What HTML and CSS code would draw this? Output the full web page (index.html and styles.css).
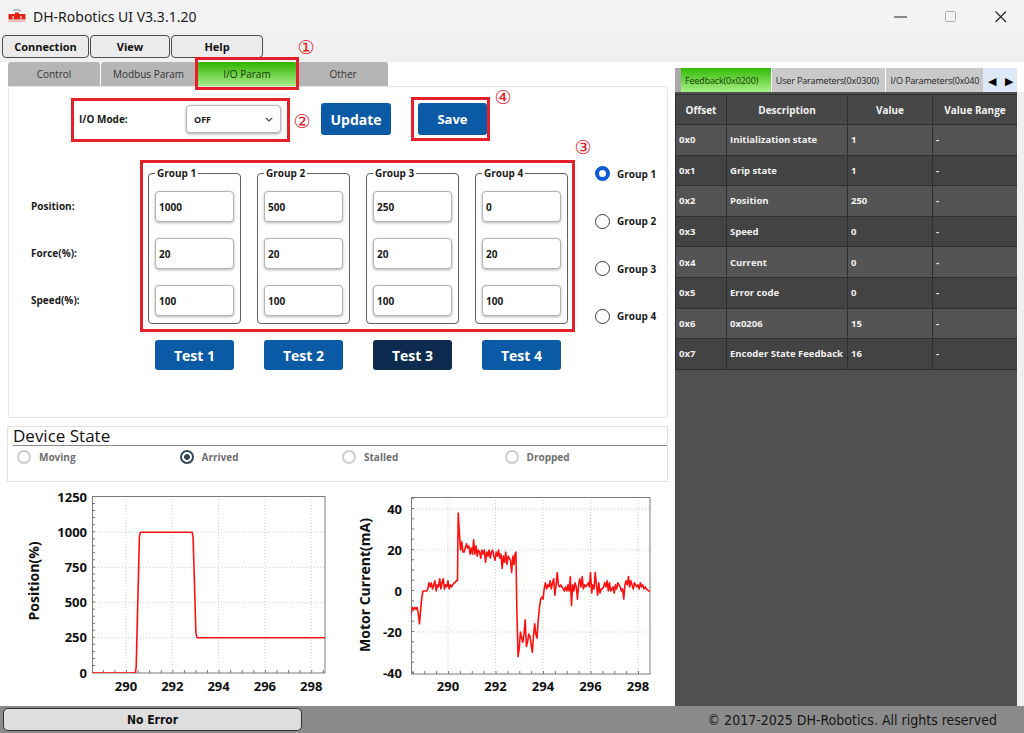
FILE: index.html
```html
<!DOCTYPE html>
<html>
<head>
<meta charset="utf-8">
<title>DH-Robotics UI V3.3.1.20</title>
<link rel="stylesheet" href="styles.css">
</head>
<body>
<div class="window">
  <header class="titlebar">
    <svg class="logo" viewBox="0 0 18 14" width="18" height="14">
      <path d="M5 3.2 Q9 -0.4 13 3.2" fill="none" stroke="#9fb4c8" stroke-width="1.4"/>
      <rect x="0.5" y="6" width="17" height="5.5" fill="#e2231a"/>
      <rect x="7" y="4.5" width="4" height="2" fill="#e2231a"/>
      <rect x="4.5" y="8" width="1" height="3.5" fill="#fff"/>
      <rect x="12.5" y="8" width="1" height="3.5" fill="#fff"/>
      <rect x="0.5" y="12.6" width="17" height="1" fill="#f08a86"/>
    </svg>
    <span class="title">DH-Robotics UI V3.3.1.20</span>
    <div class="winctrl">
      <div class="wc"><svg width="14" height="2" viewBox="0 0 14 2"><rect x="0" y="0.5" width="13" height="1" fill="#222"/></svg></div>
      <div class="wc"><svg width="12" height="12" viewBox="0 0 12 12"><rect x="0.5" y="0.5" width="10" height="10" rx="1.5" fill="none" stroke="#b0b0b0"/></svg></div>
      <div class="wc"><svg width="12" height="12" viewBox="0 0 12 12"><path d="M0.5 0.5 L11 11 M11 0.5 L0.5 11" stroke="#222" stroke-width="1.1"/></svg></div>
    </div>
  </header>

  <nav class="menubar">
    <div class="mbtn m-conn">Connection</div>
    <div class="mbtn m-view">View</div>
    <div class="mbtn m-help">Help</div>
  </nav>

  <div class="main">
    <section class="left">
      <div class="tabs">
        <div class="tab t1">Control</div>
        <div class="tab t2">Modbus Param</div>
        <div class="tab t3 active">I/O Param</div>
        <div class="tab t4">Other</div>
      </div>

      <div class="panel">
        <div class="iorow">
          <span class="iolabel">I/O Mode:</span>
          <div class="sel"><span>OFF</span>
            <svg width="8" height="5" viewBox="0 0 8 5"><path d="M0.8 0.8 L4 4 L7.2 0.8" fill="none" stroke="#444" stroke-width="1.2"/></svg>
          </div>
          <div class="btn b-update">Update</div>
          <div class="btn b-save">Save</div>
        </div>

        <div class="grouprow">
          <div class="labels">
            <div class="lab">Position:</div>
            <div class="lab">Force(%):</div>
            <div class="lab">Speed(%):</div>
          </div>
          <div class="groups">
            <div class="gbox"><div class="gtitle">Group 1</div>
              <div class="inp">1000</div><div class="inp">20</div><div class="inp">100</div></div>
            <div class="gbox"><div class="gtitle">Group 2</div>
              <div class="inp">500</div><div class="inp">20</div><div class="inp">100</div></div>
            <div class="gbox"><div class="gtitle">Group 3</div>
              <div class="inp">250</div><div class="inp">20</div><div class="inp">100</div></div>
            <div class="gbox"><div class="gtitle">Group 4</div>
              <div class="inp">0</div><div class="inp">20</div><div class="inp">100</div></div>
          </div>
          <div class="radios">
            <div class="gr"><span class="rc on"></span>Group 1</div>
            <div class="gr"><span class="rc"></span>Group 2</div>
            <div class="gr"><span class="rc"></span>Group 3</div>
            <div class="gr"><span class="rc"></span>Group 4</div>
          </div>
        </div>

        <div class="tests">
          <div class="btn tbtn">Test 1</div>
          <div class="btn tbtn">Test 2</div>
          <div class="btn tbtn dark">Test 3</div>
          <div class="btn tbtn">Test 4</div>
        </div>
      </div>

      <div class="device">
        <div class="dtitle">Device State</div>
        <div class="states">
          <div class="st"><span class="rd"></span>Moving</div>
          <div class="st"><span class="rd on"></span>Arrived</div>
          <div class="st"><span class="rd"></span>Stalled</div>
          <div class="st"><span class="rd"></span>Dropped</div>
        </div>
      </div>

      <div class="charts">
        <svg width="668" height="224" viewBox="0 0 668 224">
          <defs>
            <clipPath id="cl"><rect x="92" y="14" width="233" height="177"/></clipPath>
            <clipPath id="cr"><rect x="411" y="15" width="239" height="177"/></clipPath>
          </defs>
          <!-- left chart -->
          <g class="grid">
            <path d="M126 14V191M172.3 14V191M218.6 14V191M264.9 14V191M311.2 14V191M92 155.8H325M92 120.6H325M92 85.4H325M92 50.2H325"/>
          </g>
          <path class="minor" d="M93.5 191V14" stroke-dasharray="1 6.04"/>
          <path class="minor" d="M102.85 189.5H325" stroke-dasharray="1 10.575"/>
          <rect class="frame" x="92.5" y="14.5" width="232.5" height="176.5"/>
          <g clip-path="url(#cl)">
            <g transform="translate(126 191) scale(23.15 -0.1408)">
              <polyline class="line" points="-1.7,0 0.40,0 0.44,40 0.58,970 0.62,1000 2.86,1000 2.9,960 3.02,280 3.07,250 8.8,250"/>
            </g>
          </g>
          <g class="tl">
            <text x="87" y="19.5" text-anchor="end">1250</text>
            <text x="87" y="54.7" text-anchor="end">1000</text>
            <text x="87" y="89.9" text-anchor="end">750</text>
            <text x="87" y="125.1" text-anchor="end">500</text>
            <text x="87" y="160.3" text-anchor="end">250</text>
            <text x="87" y="195.5" text-anchor="end">0</text>
            <text x="126" y="209" text-anchor="middle">290</text>
            <text x="172.3" y="209" text-anchor="middle">292</text>
            <text x="218.6" y="209" text-anchor="middle">294</text>
            <text x="264.9" y="209" text-anchor="middle">296</text>
            <text x="311.2" y="209" text-anchor="middle">298</text>
          </g>
          <text class="at" transform="translate(39 99) rotate(-90)" text-anchor="middle">Position(%)</text>

          <!-- right chart -->
          <g class="grid">
            <path d="M448 15V192M495.5 15V192M543 15V192M590.5 15V192M638 15V192M411 27H650M411 68H650M411 109H650M411 150H650"/>
          </g>
          <path class="minor" d="M412.5 191V15" stroke-dasharray="1 9.25"/>
          <path class="minor" d="M412.4 190.5H650" stroke-dasharray="1 10.875"/>
          <rect class="frame" x="411.5" y="15.5" width="238.5" height="176.5"/>
          <g clip-path="url(#cr)">
            <g transform="translate(448 109) scale(23.75 -2.05)">
              <polyline class="line" points="-1.6,-13 -1.5,-8 -1.45,-9 -1.4,-8 -1.35,-9 -1.3,-8 -1.25,-11 -1.2,-16 -1.15,-9 -1.1,-3 -1.05,0 -1.0,0 -0.9,0 -0.85,1 -0.8,4 -0.75,2 -0.7,4 -0.65,1 -0.6,3 -0.55,5 -0.5,0 -0.45,3 -0.4,2 -0.35,6 -0.3,1 -0.25,4 -0.2,6 -0.15,1 -0.1,3 -0.05,2 0,5 0.05,1 0.1,3 0.15,2 0.2,3 0.25,4 0.3,4 0.35,5 0.40,5 0.43,38 0.48,28 0.53,20 0.58,24 0.63,19 0.68,19 0.73,21 0.78,23 0.83,21 0.88,22 0.93,18 0.98,21 1.03,18 1.08,25 1.13,18 1.18,22 1.23,17 1.28,20 1.33,19 1.38,16 1.43,20 1.48,18 1.53,20 1.58,14 1.63,19 1.68,17 1.73,20 1.78,16 1.83,19 1.88,20 1.93,17 1.98,15 2.03,19 2.08,17 2.13,20 2.18,16 2.23,18 2.28,11 2.33,17 2.38,14 2.43,19 2.48,13 2.53,17 2.58,16 2.63,15 2.68,9 2.73,17 2.78,13 2.82,18 2.86,19 2.9,-10 2.95,-32 3.0,-28 3.05,-20 3.1,-23 3.15,-25 3.2,-21 3.25,-14 3.3,-27 3.35,-25 3.4,-21 3.45,-22 3.5,-26 3.55,-30 3.6,-22 3.65,-16 3.7,-21 3.75,-23 3.8,-14 3.85,-8 3.9,-4 3.95,-3 4.0,-4 4.05,1 4.1,4 4.15,1 4.2,3 4.25,2 4.3,5 4.35,1 4.4,4 4.45,6 4.5,-2 4.55,3 4.6,9 4.65,3 4.7,2 4.75,3 4.8,2 4.85,1 4.9,0 4.95,2 5.0,0 5.05,3 5.1,0 5.15,7 5.2,-7 5.25,3 5.3,0 5.35,4 5.4,2 5.45,-4 5.5,3 5.55,6 5.6,2 5.65,7 5.7,1 5.75,3 5.8,2 5.85,3 5.9,4 5.95,2 6.0,9 6.05,-1 6.1,3 6.15,1 6.2,9 6.25,3 6.3,-2 6.35,4 6.4,-1 6.45,1 6.5,1 6.55,2 6.6,4 6.65,2 6.7,5 6.75,0 6.8,4 6.85,0 6.9,1 6.95,2 7.0,-1 7.05,3 7.1,1 7.15,4 7.2,3 7.25,2 7.3,0 7.35,1 7.4,-4 7.45,3 7.5,5 7.55,3 7.6,7 7.65,2 7.7,5 7.75,3 7.8,1 7.85,4 7.9,3 7.95,2 8.0,3 8.05,1 8.1,4 8.15,2 8.2,3 8.25,1 8.3,2 8.35,1 8.45,0 8.6,0"/>
            </g>
          </g>
          <g class="tl">
            <text x="402" y="31.5" text-anchor="end">40</text>
            <text x="402" y="72.5" text-anchor="end">20</text>
            <text x="402" y="113.5" text-anchor="end">0</text>
            <text x="402" y="154.5" text-anchor="end">-20</text>
            <text x="402" y="195.5" text-anchor="end">-40</text>
            <text x="448" y="209" text-anchor="middle">290</text>
            <text x="495.5" y="209" text-anchor="middle">292</text>
            <text x="543" y="209" text-anchor="middle">294</text>
            <text x="590.5" y="209" text-anchor="middle">296</text>
            <text x="638" y="209" text-anchor="middle">298</text>
          </g>
          <text class="at" transform="translate(370 103) rotate(-90)" text-anchor="middle">Motor Current(mA)</text>
        </svg>
      </div>
    </section>

    <aside class="right">
      <div class="rtabs">
        <div class="rstub"></div>
        <div class="rtab ractive">Feedback(0x0200)</div>
        <div class="rtab r2">User Parameters(0x0300)</div>
        <div class="rtab r3">I/O Parameters(0x040</div>
        <div class="arrows"><span>&#9664;</span><span>&#9654;</span></div>
      </div>
      <div class="rbody">
        <table>
          <colgroup><col class="c1"><col class="c2"><col class="c3"><col class="c4"></colgroup>
          <thead><tr><th>Offset</th><th>Description</th><th>Value</th><th>Value Range</th></tr></thead>
          <tbody>
            <tr><td>0x0</td><td>Initialization state</td><td>1</td><td>-</td></tr>
            <tr><td>0x1</td><td>Grip state</td><td>1</td><td>-</td></tr>
            <tr><td>0x2</td><td>Position</td><td>250</td><td>-</td></tr>
            <tr><td>0x3</td><td>Speed</td><td>0</td><td>-</td></tr>
            <tr><td>0x4</td><td>Current</td><td>0</td><td>-</td></tr>
            <tr><td>0x5</td><td>Error code</td><td>0</td><td>-</td></tr>
            <tr><td>0x6</td><td>0x0206</td><td>15</td><td>-</td></tr>
            <tr><td>0x7</td><td>Encoder State Feedback</td><td>16</td><td>-</td></tr>
          </tbody>
        </table>
      </div>
    </aside>
    <div class="edge"></div>
  </div>

  <footer class="status">
    <div class="err">No Error</div>
    <div class="copy">© 2017-2025 DH-Robotics. All rights reserved</div>
  </footer>

  <div class="anno a1"></div>
  <div class="anno a2"></div>
  <div class="anno a3"></div>
  <div class="anno a4"></div>
  <span class="num n1">①</span>
  <span class="num n2">②</span>
  <span class="num n3">③</span>
  <span class="num n4">④</span>
</div>
</body>
</html>
```

FILE: styles.css
```css
* { box-sizing: border-box; }
html, body { margin: 0; padding: 0; }
body {
  width: 1024px; height: 733px; overflow: hidden;
  font-family: "Open Sans", "Noto Sans", sans-serif;
  color: #1a1a1a; background: #fff;
}
.window { position: relative; width: 1024px; height: 733px; display: flex; flex-direction: column; }

/* title bar */
.titlebar { height: 33px; flex: none; background: #f3f3f3; display: flex; align-items: center; padding-left: 8px; }
.logo { display: block; margin-top: -4px; }
.title { margin-left: 7px; font-family: "Noto Sans", sans-serif; font-size: 14px; color: #1b1b1b; }
.winctrl { margin-left: auto; margin-right: -2px; display: flex; }
.wc { width: 50px; height: 33px; display: flex; align-items: center; justify-content: center; }

/* menu */
.menubar { height: 29px; flex: none; background: #f0f0f0; display: flex; gap: 1px; padding: 2px 0 0 2px; align-items: flex-start; }
.mbtn {
  height: 23px; border: 1px solid #4c4c4c; border-radius: 4px; background: #ebebeb;
  font-weight: 700; font-size: 11px; display: flex; align-items: center; justify-content: center; color: #111;
}
.m-conn { width: 87px; }
.m-view { width: 80px; }
.m-help { width: 92px; }

.main { flex: 1; display: flex; background: #fff; min-height: 0; }
.left { width: 668px; flex: none; display: flex; flex-direction: column; }

/* tabs */
.tabs { height: 24px; flex: none; margin-left: 8px; display: flex; gap: 1px; }
.tab {
  height: 24px; background: #b5b5b5; border-radius: 3px 3px 0 0;
  font-size: 10px; color: #333; display: flex; align-items: center; justify-content: center;
}
.t1 { width: 92px; }
.t2 { width: 95px; }
.t3 { width: 100px; }
.t4 { width: 90px; }
.tab.active { background: linear-gradient(#2fb400, #a9ee8a); color: #1d3a10; }

/* main panel */
.panel { height: 332px; flex: none; margin-left: 8px; border: 1px solid #e6e6e6; }
.iorow { display: flex; align-items: center; height: 32px; margin-top: 16px; padding-left: 70px; }
.iolabel { width: 107px; font-weight: 700; font-size: 10px; }
.sel {
  width: 95px; height: 28px; border: 1px solid #b8b8b8; border-radius: 4px; background: #fff;
  box-shadow: 0 1px 3px rgba(0,0,0,.35);
  display: flex; align-items: center; justify-content: space-between; padding: 0 7px;
  font-weight: 700; font-size: 9px;
}
.btn {
  background: #0b5aa5; color: #fff; font-weight: 700; border-radius: 3px;
  display: flex; align-items: center; justify-content: center;
}
.b-update { width: 70px; height: 32px; margin-left: 40px; font-size: 14px; }
.b-save { width: 69px; height: 32px; margin-left: 27px; font-size: 13px; }

.grouprow { display: flex; height: 151px; margin-top: 38px; }
.labels { width: 139px; padding: 18px 0 0 22px; display: flex; flex-direction: column; gap: 16px; }
.lab { height: 31px; line-height: 31px; font-weight: 700; font-size: 10px; }
.groups { display: flex; gap: 16px; }
.gbox { width: 93px; height: 151px; border: 1px solid #606060; border-radius: 4px; padding: 0 6px; }
.gtitle {
  width: fit-content; margin: -8px 0 0 0; padding: 0 2px; background: #fff;
  line-height: 14px; font-weight: 700; font-size: 10px;
}
.inp {
  height: 31px; margin-top: 16px; border: 1px solid #b3b3b3; border-radius: 4px; background: #fff;
  box-shadow: 0 1px 3px rgba(0,0,0,.3);
  display: flex; align-items: center; padding-left: 3px; font-weight: 700; font-size: 10px;
}
.gtitle + .inp { margin-top: 11px; }
.radios { margin: -7px 0 0 27px; display: flex; flex-direction: column; gap: 32.6px; }
.gr { height: 15px; display: flex; align-items: center; font-weight: 700; font-size: 10px; }
.rc { width: 15px; height: 15px; border: 1px solid #3c3c3c; border-radius: 50%; margin-right: 7px; background: #fff; }
.rc.on { border: 4.5px solid #0b5cd4; }

.tests { display: flex; gap: 30px; margin-top: 16px; padding-left: 146px; }
.tbtn { width: 79px; height: 30px; font-size: 14px; }
.tbtn.dark { background: #0d2b4e; }

/* device state */
.device { margin: 8px 0 0 7px; width: 661px; height: 56px; flex: none; border: 1px solid #e2e2e2; }
.dtitle { margin-left: 5px; height: 19px; line-height: 18px; font-size: 17px; color: #111; border-bottom: 1px solid #8a8a8a; }
.states { display: flex; margin-top: 4px; padding-left: 9px; }
.st { width: 165.5px; height: 14px; display: flex; align-items: center; font-weight: 700; font-size: 10px; color: #6f6f6f; }
.rd { width: 14px; height: 14px; border: 2px solid #cdcdcd; border-radius: 50%; margin-right: 8px; background: #fff; }
.rd.on { border-color: #34475a; background: radial-gradient(circle, #34475a 0 2.6px, #fff 3.2px); }

/* charts */
.charts { height: 224px; flex: none; }
.charts svg { display: block; }
.grid path { stroke: #cfcfcf; stroke-width: 1; stroke-dasharray: 1 2; fill: none; }
.minor { stroke: #777; stroke-width: 3; fill: none; }
.frame { fill: none; stroke: #7a7a7a; stroke-width: 1; }
.line { fill: none; stroke: #ff1010; stroke-width: 1.6; vector-effect: non-scaling-stroke; stroke-linejoin: round; }
.tl text { font-family: "Open Sans", sans-serif; font-weight: 700; font-size: 13px; fill: #111; }
.at { font-family: "Open Sans", sans-serif; font-weight: 700; font-size: 14px; fill: #111; }

/* right panel */
.right { width: 342px; flex: none; margin-left: 7px; display: flex; flex-direction: column; }
.rtabs { height: 24px; margin-top: 6px; flex: none; display: flex; }
.rstub { width: 6px; background: #a9a9a9; }
.rtab {
  height: 24px; font-size: 9px; letter-spacing: -0.15px; color: #222; background: #c9c9c9;
  display: flex; align-items: center; padding-left: 4px; white-space: nowrap; overflow: hidden;
}
.ractive { width: 90px; background: linear-gradient(#34bc06, #a8ef88); color: #173a08; }
.r2 { width: 114px; margin-left: 1px; }
.r3 { width: 97px; margin-left: 1px; }
.arrows {
  width: 34px; background: #dde9f6; display: flex; align-items: center; justify-content: space-around;
  font-size: 11px; color: #000;
}
.rbody { flex: 1; background: #505050; padding-top: 2px; }
table { border-collapse: collapse; width: 342px; table-layout: fixed; }
col.c1 { width: 51px; }
col.c2 { width: 121px; }
col.c3 { width: 85px; }
col.c4 { width: 85px; }
th, td { border: 1px solid #2f2f2f; color: #f2f2f2; font-weight: 700; font-size: 9.5px; white-space: nowrap; overflow: hidden; }
th { height: 30px; background: #474747; text-align: center; font-size: 10px; }
td { height: 30.6px; padding: 0 0 0 3px; text-align: left; }
tbody tr:nth-child(odd) td { background: #545454; }
tbody tr:nth-child(even) td { background: #434343; }
.edge { width: 7px; flex: none; margin-top: 30px; background: #efefef; }

/* status bar */
.status { height: 27px; flex: none; background: #8b8b8b; display: flex; align-items: center; }
.err {
  margin-left: 3px; width: 299px; height: 23px; border: 1px solid #303030; border-radius: 5px;
  background: #dedede; display: flex; align-items: center; justify-content: center;
  font-family: "Liberation Sans Narrow", "DejaVu Sans Condensed", Roboto, sans-serif; font-size: 12px; font-weight: 700; color: #111;
}
.copy {
  margin-left: auto; margin-right: 27px;
  font-family: "Liberation Sans Narrow", "DejaVu Sans Condensed", Roboto, sans-serif; font-size: 14px; font-weight: 500; color: #151515;
}

/* annotations */
.anno { position: absolute; border: 3px solid #e5202a; }
.a1 { left: 195px; top: 57px; width: 104px; height: 33px; }
.a2 { left: 71px; top: 98px; width: 219px; height: 44px; }
.a3 { left: 411px; top: 97px; width: 79px; height: 44px; }
.a4 { left: 140px; top: 160px; width: 435px; height: 172px; }
.num {
  position: absolute; width: 24px; height: 24px; display: flex; align-items: center; justify-content: center;
  font-family: "DejaVu Sans", sans-serif; font-size: 19px; line-height: 1; color: #e5202a;
}
.n1 { left: 294px; top: 35px; }
.n2 { left: 290px; top: 109px; }
.n3 { left: 571px; top: 135px; }
.n4 { left: 491px; top: 85px; }
```
